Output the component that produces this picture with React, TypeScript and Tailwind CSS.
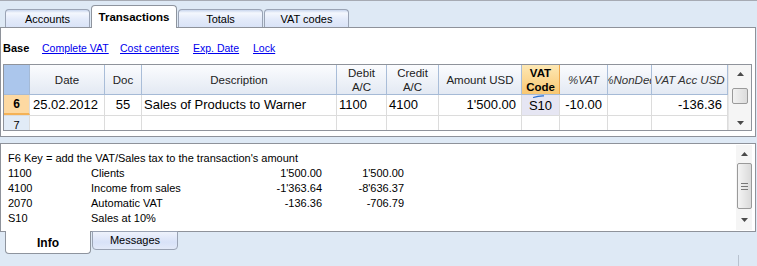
import React from "react";

const F = { fontFamily: '"Liberation Sans", Arial, sans-serif' };

function TopTab({ label, active }: { label: string; active?: boolean }) {
  if (active) {
    return (
      <div className="relative z-10 -mb-px flex h-[23px] w-[86px] items-center justify-center rounded-t-[4px] border border-b-0 border-[#8e949e] bg-white pt-[1px] text-[11.5px] font-bold text-black">
        {label}
      </div>
    );
  }
  return (
    <div className="flex h-[18px] w-[85px] items-center justify-center rounded-t-[4px] border border-b-0 border-[#9aa3b4] bg-[linear-gradient(to_bottom,#c9d6ee_0px,#f4f7fd_3px,#e4ebfa_9px,#d9e3f7_17px)] pt-[1px] text-[11px] text-black">
      {label}
    </div>
  );
}

type Col = { w: string; head: React.ReactNode; cls?: string };

const cols: Col[] = [
  { w: "w-[75px]", head: "Date" },
  { w: "w-[37px]", head: "Doc" },
  { w: "w-[195px]", head: "Description" },
  { w: "w-[50px]", head: <>Debit<br />A/C</> },
  { w: "w-[52px]", head: <>Credit<br />A/C</> },
  { w: "w-[83px]", head: "Amount USD" },
  { w: "w-[38px]", head: <>VAT<br />Code</>, cls: "vat" },
  { w: "w-[48px]", head: "%VAT", cls: "italic" },
  { w: "w-[44px]", head: "%NonDed", cls: "italic" },
  { w: "w-[76px]", head: "VAT Acc USD", cls: "italic" },
];

function ArrowUp() {
  return (
    <svg width="7" height="4" viewBox="0 0 7 4">
      <path d="M0 4 L3.5 0 L7 4 Z" fill="#4a4a4a" />
    </svg>
  );
}
function ArrowDown() {
  return (
    <svg width="7" height="4" viewBox="0 0 7 4">
      <path d="M0 0 L3.5 4 L7 0 Z" fill="#4a4a4a" />
    </svg>
  );
}

export default function App() {
  const row6: { v: string; cls: string }[] = [
    { v: "25.02.2012", cls: "pl-[3px]" },
    { v: "55", cls: "justify-center" },
    { v: "Sales of Products to Warner", cls: "pl-[2px]" },
    { v: "1100", cls: "pl-[2px]" },
    { v: "4100", cls: "pl-[2px]" },
    { v: "1'500.00", cls: "justify-end pr-[5px]" },
    { v: "S10", cls: "justify-center bg-[#e6e6f3] relative pt-[1px]" },
    { v: "-10.00", cls: "justify-end pr-[5px]" },
    { v: "", cls: "" },
    { v: "-136.36", cls: "justify-end pr-[5px]" },
  ];

  const info = [
    ["1100", "Clients", "1'500.00", "1'500.00"],
    ["4100", "Income from sales", "-1'363.64", "-8'636.37"],
    ["2070", "Automatic VAT", "-136.36", "-706.79"],
    ["S10", "Sales at 10%", "", ""],
  ];

  return (
    <div
      style={F}
      className="relative h-[266px] w-[757px] overflow-hidden border-t border-[#a6aab3] bg-[#dee9f5] text-black"
    >
      {/* Top tabs */}
      <div className="flex h-[26px] items-end gap-[1px] pl-[5px]">
        <TopTab label="Accounts" />
        <TopTab label="Transactions" active />
        <TopTab label="Totals" />
        <TopTab label="VAT codes" />
      </div>

      {/* Transactions panel */}
      <div className="flex h-[110px] w-[756px] flex-col border border-[#8e929a] bg-white">
        <div className="flex h-[36px] items-center pl-[2px] pt-[5px] text-[10.5px]">
          <span className="w-[39px] text-[11px] font-bold">Base</span>
          <span className="w-[78px] text-[#0000ee] underline">Complete VAT</span>
          <span className="w-[73px] text-[#0000ee] underline">Cost centers</span>
          <span className="w-[60px] text-[#0000ee] underline">Exp. Date</span>
          <span className="text-[#0000ee] underline">Lock</span>
        </div>

        {/* Grid */}
        <div className="ml-[2px] flex h-[67px] w-[749px] overflow-hidden border border-[#8f939b]">
          <div className="flex w-[724px] flex-col">
            {/* header */}
            <div className="flex h-[30px] shrink-0 border-b border-[#a5bad6]">
              <div className="w-[26px] border-r border-[#a5bad6] bg-[#abc6ec]" />
              {cols.map((c, i) => (
                <div
                  key={i}
                  className={`${c.w} flex items-center justify-center overflow-hidden whitespace-nowrap text-center text-[11.5px] leading-[14px] ${
                    c.cls === "vat"
                      ? "border-r border-[#eea64a] bg-[linear-gradient(to_bottom,#fde8b4,#f9c772)] font-bold"
                      : "border-r border-[#a9bdd8] bg-[linear-gradient(to_bottom,#fbfcfe,#e3e9f3)] " +
                        (c.cls === "italic" ? "italic text-[#333]" : "text-[#222]")
                  }`}
                >
                  <span className="shrink-0">{c.head}</span>
                </div>
              ))}
            </div>
            {/* row 6 */}
            <div className="flex h-[21px] shrink-0 border-b border-[#dcdcdc] text-[13px]">
              <div className="flex w-[26px] items-center justify-center border-r border-[#dcdcdc] border-b-2 border-b-[#f4b257] bg-[#fdd9a2] text-[12px] font-bold">
                6
              </div>
              {cols.map((c, i) => (
                <div
                  key={i}
                  className={`${c.w} flex items-center overflow-hidden whitespace-nowrap border-r border-[#dcdcdc] ${row6[i].cls}`}
                >
                  {i === 6 && (
                    <svg
                      className="absolute left-[11px] top-0"
                      width="12"
                      height="3"
                      viewBox="0 0 12 3"
                    >
                      <path d="M0 2.6 Q5 0.6 11 0.8" stroke="#2a6fd0" strokeWidth="1.3" fill="none" />
                    </svg>
                  )}
                  {row6[i].v}
                </div>
              ))}
            </div>
            {/* row 7 */}
            <div className="flex h-[21px] shrink-0 text-[13px]">
              <div className="flex w-[26px] items-start justify-center border-r border-[#dcdcdc] bg-[#e1ebf7] pt-[1px] text-[11px]">
                7
              </div>
              {cols.map((c, i) => (
                <div key={i} className={`${c.w} border-r border-[#dcdcdc]`} />
              ))}
            </div>
          </div>
          {/* scrollbar */}
          <div className="flex w-[23px] flex-col items-center border-l border-[#e6e6e6] bg-[#f5f5f5]">
            <div className="flex h-[18px] items-center justify-center">
              <ArrowUp />
            </div>
            <div className="mt-[5px] h-[16px] w-[16px] rounded-[2px] border border-[#9a9a9a] bg-[linear-gradient(to_right,#f2f2f2,#dcdcdc)]" />
            <div className="flex flex-1 items-end justify-center pb-[5px]">
              <ArrowDown />
            </div>
          </div>
        </div>
      </div>

      {/* Info panel */}
      <div className="mt-[6px] flex h-[89px] w-[756px] border border-[#8e929a] bg-white">
        <div className="flex-1 pl-[7px] pt-[7px] text-[11px] leading-[15px]">
          <div>F6 Key = add the VAT/Sales tax to the transaction&apos;s amount</div>
          {info.map((r, i) => (
            <div key={i} className="flex">
              <span className="w-[83px]">{r[0]}</span>
              <span className="w-[150px]">{r[1]}</span>
              <span className="w-[81px] text-right">{r[2]}</span>
              <span className="w-[82px] text-right">{r[3]}</span>
            </div>
          ))}
        </div>
        <div className="mr-[3px] mt-[1px] flex h-[85px] w-[16px] flex-col items-center bg-[#f5f5f5]">
          <div className="flex h-[18px] items-center justify-center">
            <ArrowUp />
          </div>
          <div className="flex h-[46px] w-[15px] items-center justify-center rounded-[2px] border border-[#9a9a9a] bg-[linear-gradient(to_right,#f4f4f4,#dadada)]">
            <svg width="7" height="9" viewBox="0 0 7 9">
              <path d="M0 1.5H7M0 4.5H7M0 7.5H7" stroke="#777" strokeWidth="1" />
            </svg>
          </div>
          <div className="flex flex-1 items-center justify-center">
            <ArrowDown />
          </div>
        </div>
      </div>

      {/* Bottom tabs */}
      <div className="flex gap-[1px] pl-[5px]">
        <div className="relative z-10 -mt-px flex h-[23px] w-[86px] items-center justify-center rounded-b-[4px] border border-t-0 border-[#8e949e] bg-white pt-[1px] text-[12px] font-bold">
          Info
        </div>
        <div className="-mt-px flex h-[19px] w-[86px] items-center justify-center rounded-b-[4px] border border-[#9aa3b4] bg-[linear-gradient(to_bottom,#eef2fc,#d8e2f8_60%,#e3eaf9)] text-[11px]">
          Messages
        </div>
      </div>

      <div className="absolute left-[738px] top-[254px] h-[12px] w-px bg-[#b8c2cf]" />
    </div>
  );
}
